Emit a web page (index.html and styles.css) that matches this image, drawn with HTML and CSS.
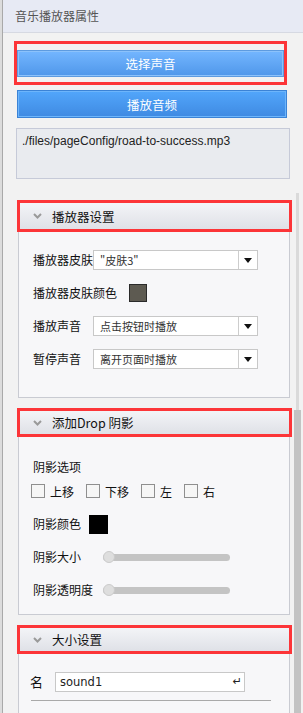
FILE: index.html
```html
<!DOCTYPE html>
<html lang="zh">
<head>
  <meta charset="UTF-8">
  <title>音乐播放器属性</title>
  <link rel="stylesheet" href="styles.css">
</head>
<body>

  <div class="panel">
    <div class="title">音乐播放器属性</div>

    <div class="top">
      <div class="mark mark-btn">
        <button type="button" class="btn btn-light">选择声音</button>
      </div>
      <button type="button" class="btn btn-play">播放音频</button>
      <div class="path-box">./files/pageConfig/road-to-success.mp3</div>
    </div>

    <div class="scroll">
      <div class="sections">

        <div class="section">
          <div class="mark sec-head sec-head-tall">
            <svg class="chev" width="9" height="6" viewBox="0 0 9 6"><path d="M1 1 L4.5 4.5 L8 1" fill="none" stroke="#9a9a9a" stroke-width="2"/></svg>
            <span>播放器设置</span>
          </div>
          <div class="sec-body sec-player">
            <div class="row">
              <label class="lbl">播放器皮肤</label>
              <div class="select"><span>"皮肤3"</span><i class="arrow"></i></div>
            </div>
            <div class="row">
              <label class="lbl lbl-auto">播放器皮肤颜色</label>
              <div class="swatch swatch-skin"></div>
            </div>
            <div class="row">
              <label class="lbl">播放声音</label>
              <div class="select"><span>点击按钮时播放</span><i class="arrow"></i></div>
            </div>
            <div class="row">
              <label class="lbl">暂停声音</label>
              <div class="select"><span>离开页面时播放</span><i class="arrow"></i></div>
            </div>
          </div>
        </div>

        <div class="section">
          <div class="mark sec-head">
            <svg class="chev" width="9" height="6" viewBox="0 0 9 6"><path d="M1 1 L4.5 4.5 L8 1" fill="none" stroke="#9a9a9a" stroke-width="2"/></svg>
            <span>添加Drop 阴影</span>
          </div>
          <div class="sec-body sec-shadow">
            <div class="row row-text">阴影选项</div>
            <div class="row checks">
              <label class="check c1"><i class="box"></i>上移</label>
              <label class="check c2"><i class="box"></i>下移</label>
              <label class="check c3"><i class="box"></i>左</label>
              <label class="check"><i class="box"></i>右</label>
            </div>
            <div class="row">
              <label class="lbl lbl-auto">阴影颜色</label>
              <div class="swatch swatch-black"></div>
            </div>
            <div class="row">
              <label class="lbl lbl-slider">阴影大小</label>
              <div class="slider"><i class="knob"></i></div>
            </div>
            <div class="row">
              <label class="lbl lbl-slider">阴影透明度</label>
              <div class="slider"><i class="knob"></i></div>
            </div>
          </div>
        </div>

        <div class="section">
          <div class="mark sec-head">
            <svg class="chev" width="9" height="6" viewBox="0 0 9 6"><path d="M1 1 L4.5 4.5 L8 1" fill="none" stroke="#9a9a9a" stroke-width="2"/></svg>
            <span>大小设置</span>
          </div>
          <div class="sec-body sec-size">
            <div class="row">
              <label class="lbl lbl-name">名</label>
              <div class="name-input"><span>sound1</span><i class="enter">↵</i></div>
            </div>
            <div class="rule"></div>
          </div>
        </div>

      </div>
      <div class="scrollbar">
        <div class="track"></div>
        <div class="thumb"></div>
      </div>
    </div>
  </div>

</body>
</html>
```

FILE: styles.css
```css
body {
  margin: 0;
  width: 303px;
  height: 713px;
  overflow: hidden;
  background-color: #dcdcdc;
  font-family: "Noto Sans CJK SC", "Liberation Sans", sans-serif;
  font-size: 12px;
  color: #111;
}

.panel {
  margin-left: 2px;
  height: 713px;
  border-left: 1px solid #a9a9a9;
  background-color: #f2f2f2;
}

.title {
  height: 32px;
  line-height: 32px;
  padding-left: 12px;
  background-color: #e7eaf4;
  border-bottom: 1px solid #d6d9e2;
  color: #555;
  font-size: 12px;
}

.top {
  padding: 8px 0 0 11px;
}

/* red annotation boxes */
.mark {
  border: 3px solid #fc3538;
}

.mark-btn {
  width: 267px;
  padding: 6px 0 5px 0;
}

.btn {
  display: block;
  width: 100%;
  padding: 0;
  font-family: "Noto Sans CJK SC", sans-serif;
  font-size: 12.5px;
  color: #fff;
  cursor: pointer;
}

.btn-light {
  height: 27px;
  background: linear-gradient(#74b6ff, #4f97ea);
  border: 1px solid #5d9be0;
  box-shadow: inset 0 0 0 1px #8cc2fb;
}

.btn-play {
  margin: 5px 0 0 3px;
  width: 270px;
  height: 28px;
  background: linear-gradient(#52a6fb, #3f8ae2);
  border: 1px solid #3b83d6;
  box-shadow: inset 0 0 0 1px #6db5fb;
}

.path-box {
  margin: 10px 0 0 2px;
  width: 262px;
  height: 41px;
  padding: 4px 5px;
  background-color: #e9ebef;
  border: 1px solid #c6cad8;
  font-family: "Liberation Sans", sans-serif;
  font-size: 12px;
  line-height: 16px;
  color: #222;
}

.scroll {
  display: flex;
  margin-top: 14px;
}

.sections {
  width: 275px;
  margin-left: 14px;
  padding-top: 7px;
}

.section {
  margin-bottom: 10px;
}

.sec-head {
  display: flex;
  align-items: center;
  height: 23px;
  padding-left: 13px;
  background: linear-gradient(#f3f4f7, #dfe1e7);
  font-size: 12.5px;
  color: #111;
}

.sec-head-tall {
  height: 26px;
}

.chev {
  margin-right: 10px;
}

.sec-body {
  margin: 0 2px 0 1px;
  padding-left: 14px;
  background-color: #f7f7f9;
  border: 1px solid #c9cbd2;
  border-top: none;
}

.sec-player {
  height: 166px;
  padding-top: 18px;
  box-sizing: border-box;
}

.sec-shadow {
  height: 178px;
  padding-top: 19px;
  box-sizing: border-box;
}

.sec-size {
  height: 70px;
  padding-top: 18px;
  box-sizing: border-box;
}

.row {
  display: flex;
  align-items: center;
  height: 20px;
  margin-bottom: 13px;
}

.sec-shadow .row {
  margin-bottom: 13px;
}

.sec-shadow .row-text {
  margin-bottom: 5px;
}

.lbl {
  width: 60px;
  flex-shrink: 0;
  line-height: 20px;
}

.lbl-auto {
  width: auto;
  margin-right: 12px;
}

.sec-shadow .lbl-auto {
  margin-right: 8px;
}

.lbl-slider {
  width: 70px;
}

.lbl-name {
  width: auto;
  margin: 0 12px 0 -3px;
  font-size: 13px;
}

.select {
  position: relative;
  display: flex;
  align-items: center;
  width: 163px;
  height: 18px;
  background-color: #fff;
  border: 1px solid #c8c8c8;
  font-size: 11px;
  color: #333;
}

.select span {
  padding-left: 6px;
}

.select .arrow {
  position: absolute;
  right: 0;
  top: 0;
  width: 18px;
  height: 18px;
  border-left: 1px solid #cdcdcd;
}

.select .arrow::after {
  content: "";
  position: absolute;
  left: 5px;
  top: 7px;
  border-left: 4.5px solid transparent;
  border-right: 4.5px solid transparent;
  border-top: 5px solid #111;
}

.swatch {
  width: 16px;
  height: 16px;
  border: 1px solid #2a2a2a;
}

.swatch-skin {
  background-color: #5d5a51;
}

.swatch-black {
  width: 17px;
  height: 17px;
  background-color: #000;
  border-color: #000;
}

.checks {
  margin-left: -2px;
}

.check {
  display: flex;
  align-items: center;
  font-size: 12px;
}

.check.c1,
.check.c2 {
  width: 55px;
}

.check.c3 {
  width: 43px;
}

.box {
  width: 12px;
  height: 12px;
  margin-right: 5px;
  background-color: #f6f6f6;
  border: 1px solid #8f8f8f;
}

.slider {
  position: relative;
  width: 127px;
  height: 7px;
  background-color: #c4c4c4;
  border-radius: 4px;
}

.knob {
  position: absolute;
  left: 0;
  top: -3px;
  width: 12px;
  height: 12px;
  border-radius: 50%;
  background-color: #dedede;
  border: 1px solid #cbcbcb;
  box-sizing: border-box;
}

.name-input {
  position: relative;
  display: flex;
  align-items: center;
  width: 188px;
  height: 18px;
  background-color: #fff;
  border: 1px solid #c8c8c8;
  font-family: "DejaVu Sans", sans-serif;
  font-size: 11.5px;
  color: #222;
}

.name-input span {
  padding-left: 4px;
}

.enter {
  position: absolute;
  right: 2px;
  top: 3px;
  font-style: normal;
  font-size: 11px;
  line-height: 12px;
  color: #222;
}

.rule {
  width: 240px;
  margin: -5px 0 0 -2px;
  border-top: 1px solid #a9a9a9;
}

.scrollbar {
  position: relative;
  width: 7px;
  margin-left: 2px;
}

.track {
  width: 3px;
  height: 217px;
  margin-left: 2px;
  background-color: #dadada;
}

.thumb {
  width: 7px;
  height: 320px;
  background-color: #c3c3c3;
}
```
